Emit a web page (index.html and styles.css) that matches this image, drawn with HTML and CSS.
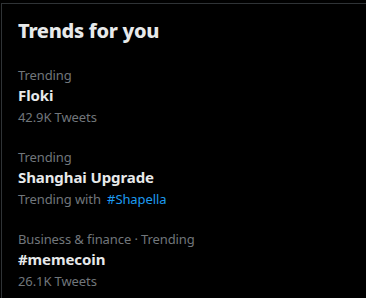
FILE: index.html
```html
<!DOCTYPE html>
<html lang="en">
<head>
  <meta charset="UTF-8" />
  <meta name="viewport" content="width=device-width, initial-scale=1" />
  <title>Trends for you</title>
  <link rel="stylesheet" href="styles.css">
</head>
<body>
  <section class="trends">
    <h2 class="trends-title">Trends for you</h2>

    <div class="trend">
      <div class="trend-meta">Trending</div>
      <div class="trend-name">Floki</div>
      <div class="trend-count">42.9K Tweets</div>
    </div>

    <div class="trend">
      <div class="trend-meta">Trending</div>
      <div class="trend-name">Shanghai Upgrade</div>
      <div class="trend-count">Trending with <a class="trend-link" href="#">#Shapella</a></div>
    </div>

    <div class="trend">
      <div class="trend-meta">Business &amp; finance · Trending</div>
      <div class="trend-name">#memecoin</div>
      <div class="trend-count">26.1K Tweets</div>
    </div>
  </section>
</body>
</html>
```

FILE: styles.css
```css
html, body {
  margin: 0;
  padding: 0;
  background: #000;
  overflow: hidden;
}
body {
  font-family: "Noto Sans", "Open Sans", Arial, sans-serif;
  color: #e7e9ea;
}

.trends {
  margin: 3px 0 0 1px;
  border-top: 1px solid #2f3336;
  border-left: 1px solid #2f3336;
}
.trends-title {
  margin: 0;
  padding: 15px 16px 12px;
  font-size: 20px;
  line-height: 24px;
  font-weight: 800;
  letter-spacing: -0.3px;
}

.trend {
  padding: 12px 16px;
}
.trend-meta,
.trend-count {
  font-size: 13px;
  line-height: 16px;
  color: #71767b;
  letter-spacing: -0.1px;
}
.trend-name {
  margin-top: 2px;
  font-size: 15px;
  line-height: 20px;
  font-weight: 700;
  letter-spacing: -0.1px;
}
.trend-count {
  margin-top: 4px;
}
.trend-link {
  margin-left: 3px;
  color: #1d9bf0;
  text-decoration: none;
}
```
